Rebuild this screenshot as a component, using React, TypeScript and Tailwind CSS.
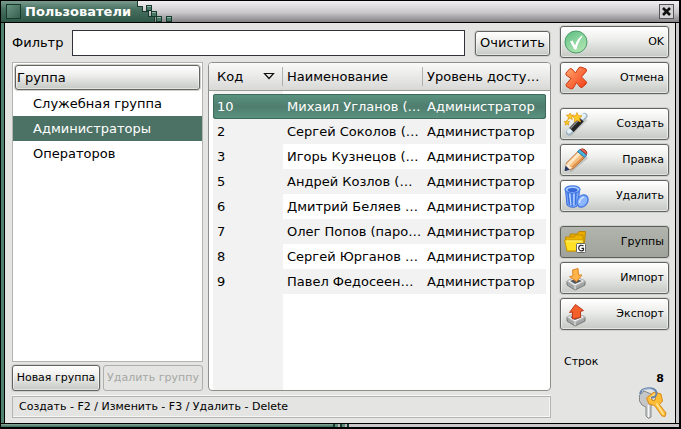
import { useState, type ReactNode } from "react";

const groups = ["Служебная группа", "Администраторы", "Операторов"];

const users = [
  ["10", "Михаил Угланов (…"],
  ["2", "Сергей Соколов (…"],
  ["3", "Игорь Кузнецов (…"],
  ["5", "Андрей Козлов (…"],
  ["6", "Дмитрий Беляев …"],
  ["7", "Олег Попов (паро…"],
  ["8", "Сергей Юрганов …"],
  ["9", "Павел Федосеен…"],
];

const raised =
  "rounded-[3px] border border-[#62655f] bg-linear-to-b from-white via-[#eeefed] via-40% to-[#c5c8c3] shadow-[inset_0_0_0_1px_#ffffff80,0_0_0_1px_#cfd0cc]";

function OkIcon() {
  return (
    <svg viewBox="0 0 28 28" className="size-7">
      <defs>
        <linearGradient id="ok" x1="0.2" y1="0" x2="0.8" y2="1">
          <stop offset="0" stopColor="#62c084" />
          <stop offset="0.5" stopColor="#8ed6a0" />
          <stop offset="1" stopColor="#b4e6b0" />
        </linearGradient>
      </defs>
      <circle cx="14" cy="14" r="11" fill="url(#ok)" stroke="#4a9c68" />
      <path d="M8 13.500 10.500 12.500 13 17.500C14.500 13 17 9.500 20 7.500L20.500 8.500C17.500 12 15.500 16.500 14.500 21.500H12.500Z" fill="#fff" />
    </svg>
  );
}

function CancelIcon() {
  return (
    <svg viewBox="0 0 28 28" className="size-7">
      <defs>
        <linearGradient id="no" x1="0" y1="0" x2="1" y2="1">
          <stop offset="0" stopColor="#ffae72" />
          <stop offset="0.5" stopColor="#fb7040" />
          <stop offset="1" stopColor="#ee3a16" />
        </linearGradient>
      </defs>
      <path d="M4 9 8 4.500 10 5 13.500 9 17 3.500 19 3 24 5 24.500 7 19.500 13 24.500 18 24 20 20 23.500 18 23 14.500 18.500 11 24.500 9 25 4.500 22.500 4 20.500 9 14.500 4 11Z" fill="url(#no)" stroke="#cc3915" strokeLinejoin="round" />
    </svg>
  );
}

function WandIcon() {
  return (
    <svg viewBox="0 0 28 28" className="size-7">
      <path d="M7 25 24 9" stroke="#9a9c97" strokeWidth="4" opacity="0.4" />
      <path d="M7 22.500 22.500 6" stroke="#9fb3c2" strokeWidth="6" strokeLinecap="round" />
      <path d="M7 21.500 9 19.500M20 7.500 22 5.500" stroke="#e4f1f8" strokeWidth="4" strokeLinecap="round" />
      <path d="M9.500 20 19.500 9.500" stroke="#252525" strokeWidth="6" />
      <path d="M8.500 18.500 18 8.500" stroke="#8b8b8b" strokeWidth="1.300" />
      <g fill="#ffc928" stroke="#dc980d" strokeWidth="0.700">
        <path d="m15 2.500 1.400 3.200 3.600.1-2.600 2.600 1.200 3.600-3.400-1.700-3 2 .5-3.700L10 6l3.600-.4Z" />
        <path d="m8 3 1 2 2.600.2-2 1.700.8 2.700-2.300-1.300-2.300 1.300.7-2.600-2.300-1.700 2.800-.2Z" />
        <path d="m5 10 .8 1.500 1.900.2-1.500 1.400.5 2-1.800-1-1.800 1 .6-2-1.700-1.300 2-.2Z" />
      </g>
    </svg>
  );
}

function PencilIcon() {
  return (
    <svg viewBox="0 0 28 28" className="size-7">
      <path d="M8 25 25 11" stroke="#888" strokeWidth="3" opacity="0.4" />
      <path d="M3.500 24 4.500 17 16 5.500 22.500 11.500 11 22.500Z" fill="#f7bd7c" stroke="#b7672b" />
      <path d="M5.500 17 16.500 6 19 8 7.500 19.500Z" fill="#ffe6c2" />
      <path d="M10 21.500 21.500 11" stroke="#e08a3e" strokeWidth="1.500" />
      <path d="M4.500 17.500 7 18 7.500 20.500 10.500 22 3.500 24.500Z" fill="#ffeed4" />
      <path d="M4 20.500 7 23.500 3 24.500Z" fill="#213363" stroke="#213363" />
      <path d="M15.500 5.500 18 3.500 24.500 9 22.500 11.500Z" fill="#4ab5e0" stroke="#267ba8" />
      <path d="M18.500 3.500C21 1.500 26 5 24.500 8.500Z" fill="#e8674e" stroke="#a62f2a" />
    </svg>
  );
}

function TrashIcon() {
  return (
    <svg viewBox="0 0 28 28" className="size-7">
      <path d="M3.500 8 5 23C8 26 14 26 16 23L17.500 8Z" fill="#79a9fa" stroke="#3867d6" />
      <path d="M6 10 7.500 23M10 11V24M14 10 13 23" stroke="#3c70de" strokeWidth="1.500" />
      <path d="M7.500 11 9 23M12 11V23" stroke="#c9e1ff" />
      <ellipse cx="10.500" cy="7.500" rx="7.500" ry="3.600" fill="#a9cdff" stroke="#477be4" strokeWidth="1.300" />
      <ellipse cx="10.500" cy="8" rx="5" ry="2" fill="#3969d9" />
      <ellipse cx="20.500" cy="19" rx="5" ry="6.500" transform="rotate(35 20.500 19)" fill="#8cb6ff" stroke="#4a7ae4" strokeWidth="1.400" />
      <path d="M17.500 21C17.500 18 20 15.500 22 15" stroke="#c9e1ff" strokeWidth="1.500" fill="none" />
    </svg>
  );
}

function FolderIcon() {
  return (
    <svg viewBox="0 0 28 28" className="size-7">
      <path d="M8 6H15L17 3.500H23.500L22 21H8Z" fill="#e9ab00" stroke="#b88909" />
      <path d="M3.500 9H12L14 7H21V23H5Z" fill="#edb400" stroke="#c28d00" />
      <path d="M2.500 12H21L22.500 23H5Z" fill="#ffe225" stroke="#cb9900" />
      <path d="M4 13H20.500" stroke="#fff47c" />
      <rect x="14.500" y="15.500" width="9" height="9" rx="1" fill="#fff" stroke="#696969" />
      <path d="M21.500 18C20 16.800 16.700 16.800 16.700 20S20 23.400 21.500 22V20.300H19.500" fill="none" stroke="#222" strokeWidth="1.200" />
    </svg>
  );
}

function TrayIcon({ up = false }: { up?: boolean }) {
  return (
    <svg viewBox="0 0 28 28" className="size-7">
      <path d="M5 17 14 13 23 17V21L13 26 5 21Z" fill="#a4a7a8" stroke="#777" />
      <path d="M5 17 14 13 23 17 13 22Z" fill="#f5f6f7" stroke="#bbb" />
      <path d="M8 17 14 14.500 20 17 13 20Z" fill="#585b5d" />
      <path d="M13 22V25.500" stroke="#eee" />
      {up ? (
        <path d="M10.500 19V12L7.500 12.500 13.500 4.500 21.500 10.500 18.500 11.500V17.500Z" fill="#f4602c" stroke="#bf371c" />
      ) : (
        <path d="M10.500 6 16 4.500 16.500 11 20 11 14.500 17.500 7.500 12.500 11 12Z" fill="#ffb34b" stroke="#df8524" />
      )}
    </svg>
  );
}

function KeysIcon() {
  return (
    <svg viewBox="0 0 32 34" className="h-[34px] w-8">
      <path d="M2.500 9 7 5 14 8 17 15 14 20V31L11.500 32.500 9 30V21L5 19 2.500 15Z" fill="#c4c6c7" stroke="#858789" />
      <path d="M11.500 19V31" stroke="#f7f7f7" strokeWidth="1.500" />
      <path d="M9.500 12 17 6 24 8 25.500 15 22.500 18.500 29 27 28 30.500 25 30 17.500 19.500 12 18Z" fill="#ffbd36" stroke="#d9891a" />
      <path d="M19.500 17.500 26.500 28.500M13 12.500 18 8" stroke="#ffe69a" strokeWidth="1.500" />
      <circle cx="16.500" cy="12.500" r="2" fill="#e5e5e2" stroke="#b97914" />
      <path d="M3 8C4 1 18 0 19.500 6.500C20 10 17 12 14 11.500" fill="none" stroke="#6684ad" strokeWidth="2" />
      <path d="M5 5C8 2 15 2 18 6" fill="none" stroke="#b9cce4" />
    </svg>
  );
}

function ActionButton({ icon, children, pressed = false }: { icon: ReactNode; children: ReactNode; pressed?: boolean }) {
  return (
    <button
      type="button"
      className={
        pressed
          ? "flex h-8 w-full items-center justify-between rounded-[3px] border border-[#5c5f5a] bg-linear-to-b from-[#b2b5ad] to-[#a0a39b] pr-1 pl-px text-[11px] shadow-[0_0_0_1px_#cfd0cc]"
          : `flex h-8 w-full items-center justify-between pr-1 pl-px text-[11px] ${raised}`
      }
    >
      {icon}
      <span>{children}</span>
    </button>
  );
}

function TitleBar() {
  return (
    <header className="flex h-[22px] items-center border-b border-black bg-linear-to-b from-[#f2f0f2] via-[#c9c7c9] via-55% to-[#858385] pr-[5px]">
      <div className="flex h-full items-center gap-1 bg-linear-to-b from-[#7a9c8f] via-[#47705f] via-40% to-[#2f5749] pl-[5px]">
        <span className="size-[15px] border border-[#16392c] bg-linear-to-br from-[#6b9583] to-[#355e4e]" />
        <h1 className="text-[13px] font-bold text-white">Пользователи</h1>
      </div>
      <svg viewBox="0 0 44 21" className="h-[21px] w-11" shapeRendering="crispEdges">
        <defs>
          <linearGradient id="cap" x1="0" y1="0" x2="0" y2="1">
            <stop offset="0" stopColor="#7a9c8f" />
            <stop offset="0.400" stopColor="#47705f" />
            <stop offset="1" stopColor="#2f5749" />
          </linearGradient>
        </defs>
        <path d="M0 0H6V5H11V10H17V15H23V21H0Z" fill="url(#cap)" />
        <path d="M6 0V5H11V10H17V15H23V21" fill="none" stroke="#183d2f" />
        <g fill="#4a7866" stroke="#173b2e">
          <path d="M15.500 4.500H20.500V9.500H15.500ZM20.500 10.500H25.500V15.500H20.500ZM25.500 15.500H30.500V20.500H25.500ZM35.500 15.500H40.500V20.500H35.500Z" />
        </g>
        <path d="M16 5H20M21 11H25M26 16H30M36 16H40" stroke="#91b4a4" />
      </svg>
      <button type="button" aria-label="Закрыть" className="ml-auto flex size-[15px] items-center justify-center border border-[#555] bg-[#d4d2d4]">
        <svg viewBox="0 0 9 9" className="size-[9px]">
          <path d="M1 1 8 8M8 1 1 8" stroke="#111" strokeWidth="2.600" />
        </svg>
      </button>
    </header>
  );
}

export default function App() {
  const [filter, setFilter] = useState("");
  return (
    <div className="flex min-h-screen flex-col border-t border-r-2 border-b-2 border-l border-black bg-linear-to-r from-[#528270] from-50% to-[#c9c7c9] to-50% font-['DejaVu_Sans',sans-serif] text-[13px] text-black">
      <TitleBar />
      <div className="mx-[3px] flex flex-1 border-r border-l border-black bg-[#e4e4e2]">
        <main className="flex min-w-0 flex-1 flex-col pt-[7px] pr-[9px] pb-[5px] pl-[7px]">
          <form className="flex h-[26px] items-center" onSubmit={(e) => e.preventDefault()}>
            <label htmlFor="filter" className="w-[60px] shrink-0">Фильтр</label>
            <input
              id="filter"
              value={filter}
              onChange={(e) => setFilter(e.target.value)}
              className="h-[26px] min-w-0 flex-1 border border-[#30333a] bg-white px-1 outline-none"
            />
            <button type="button" onClick={() => setFilter("")} className={`mr-px ml-[10px] h-[25px] w-[75px] ${raised}`}>
              Очистить
            </button>
          </form>
          <div className="mt-[6px] flex flex-1 gap-[5px]">
            <section className="flex w-[191px] shrink-0 flex-col">
              <div className="flex-1 border border-[#b3b3b0] bg-white p-[2px]">
                <h2 className={`h-[25px] pl-px leading-[23px] ${raised}`}>Группа</h2>
                <ul className="-mx-[2px] mt-px">
                  {groups.map((name, i) => (
                    <li key={name}>
                      <button type="button" className={`block h-[25px] w-full pl-5 text-left ${i === 1 ? "bg-[#4b7264] text-white" : ""}`}>
                        {name}
                      </button>
                    </li>
                  ))}
                </ul>
              </div>
              <div className="mt-[3px] flex gap-[3px] text-[11px]">
                <button type="button" className={`h-[26px] w-[88px] whitespace-nowrap ${raised}`}>Новая группа</button>
                <button type="button" disabled className="h-[26px] flex-1 rounded-[3px] border border-[#adafaa] whitespace-nowrap text-[#a5a7a3]">
                  Удалить группу
                </button>
              </div>
            </section>
            <section className="flex min-w-0 flex-1 flex-col overflow-hidden rounded-[4px] border border-[#8d8f8b] bg-white">
              <table className="w-full table-fixed border-collapse">
                <colgroup>
                  <col className="w-1" />
                  <col className="w-[70px]" />
                  <col className="w-[140px]" />
                  <col />
                  <col className="w-1" />
                </colgroup>
                <thead className="bg-linear-to-b from-[#fafafa] to-[#d8d8d6] text-left">
                  <tr className="h-[27px] border-b border-[#9b9d98]">
                    <td />
                    <th className="p-0 pl-1 font-normal">
                      <span className="flex h-[19px] items-center justify-between border-r border-[#b1b1ae] pr-[7px]">
                        Код
                        <svg viewBox="0 0 12 8" className="h-2 w-3"><path d="M1.500 1.500H10.500L6 6.500Z" fill="none" stroke="#111" strokeWidth="1.200" /></svg>
                      </span>
                    </th>
                    <th className="p-0 pl-1 font-normal">
                      <span className="block h-[19px] border-r border-[#b1b1ae] leading-[19px]">Наименование</span>
                    </th>
                    <th className="p-0 pl-1 font-normal whitespace-nowrap">Уровень досту…</th>
                    <td />
                  </tr>
                </thead>
                <tbody>
                  <tr className="h-1"><td /><td className="bg-[#f2f2f2]" /></tr>
                  {users.map(([code, name], i) =>
                    i === 0 ? (
                      <tr key={code} className="h-[25px] text-white">
                        <td />
                        <td className="rounded-l-[3px] bg-linear-to-b from-[#5a9480] via-[#507d6e] to-[#5a9480] p-0 pl-1 shadow-[inset_0_1px_#3d6a5a,inset_1px_-1px_#3d6a5a]">{code}</td>
                        <td className="bg-linear-to-b from-[#5a9480] via-[#507d6e] to-[#5a9480] p-0 pl-1 whitespace-nowrap shadow-[inset_0_1px_#3d6a5a,inset_0_-1px_#3d6a5a]">{name}</td>
                        <td className="rounded-r-[3px] bg-linear-to-b from-[#5a9480] via-[#507d6e] to-[#5a9480] p-0 pl-1 shadow-[inset_0_1px_#3d6a5a,inset_-1px_-1px_#3d6a5a]">Администратор</td>
                        <td />
                      </tr>
                    ) : (
                      <tr key={code} className="h-[25px]">
                        <td />
                        <td className="bg-[#f2f2f2] p-0 pl-1">{code}</td>
                        <td className={`p-0 pl-1 whitespace-nowrap ${i % 2 ? "bg-[#f2f2f2]" : ""}`}>{name}</td>
                        <td className={`p-0 pl-1 ${i % 2 ? "bg-[#f2f2f2]" : ""}`}>Администратор</td>
                        <td />
                      </tr>
                    ),
                  )}
                </tbody>
              </table>
              <div className="ml-1 w-[70px] flex-1 bg-[#f2f2f2]" />
            </section>
          </div>
          <footer className="mt-[5px] h-[22px] border border-[#b3b3b0] pl-[6px] text-[11px] leading-5 shadow-[0_-1px_#f8f8f8,inset_-1px_-1px_#f8f8f8]">
            Создать - F2 / Изменить - F3 / Удалить - Delete
          </footer>
        </main>
        <aside className="flex w-[115px] shrink-0 flex-col pt-[3px] pr-[6px]">
          <div className="flex flex-col gap-1">
            <ActionButton icon={<OkIcon />}>OK</ActionButton>
            <ActionButton icon={<CancelIcon />}>Отмена</ActionButton>
          </div>
          <div className="mt-[14px] flex flex-col gap-1">
            <ActionButton icon={<WandIcon />}>Создать</ActionButton>
            <ActionButton icon={<PencilIcon />}>Правка</ActionButton>
            <ActionButton icon={<TrashIcon />}>Удалить</ActionButton>
          </div>
          <div className="mt-[14px] flex flex-col gap-1">
            <ActionButton icon={<FolderIcon />} pressed>Группы</ActionButton>
            <ActionButton icon={<TrayIcon />}>Импорт</ActionButton>
            <ActionButton icon={<TrayIcon up />}>Экспорт</ActionButton>
          </div>
          <div className="mt-auto flex flex-col pb-[3px] text-[11px] leading-[17px]">
            <span className="pl-1">Строк</span>
            <span className="self-end pr-[5px] text-[11px] leading-[17px] font-bold">8</span>
            <span className="mt-[-1px] self-end"><KeysIcon /></span>
          </div>
        </aside>
      </div>
      <div className="flex h-1 border-t border-black bg-[#c9c7c9]">
        <div className="w-[49%] bg-linear-to-b from-[#87aa9b] to-[#3f6b5a]" />
        <div className="w-4 bg-[repeating-linear-gradient(90deg,#1b3d31_0_2px,#5f8c7a_2px_5px,#b5b5b5_5px_7px)]" />
      </div>
    </div>
  );
}
